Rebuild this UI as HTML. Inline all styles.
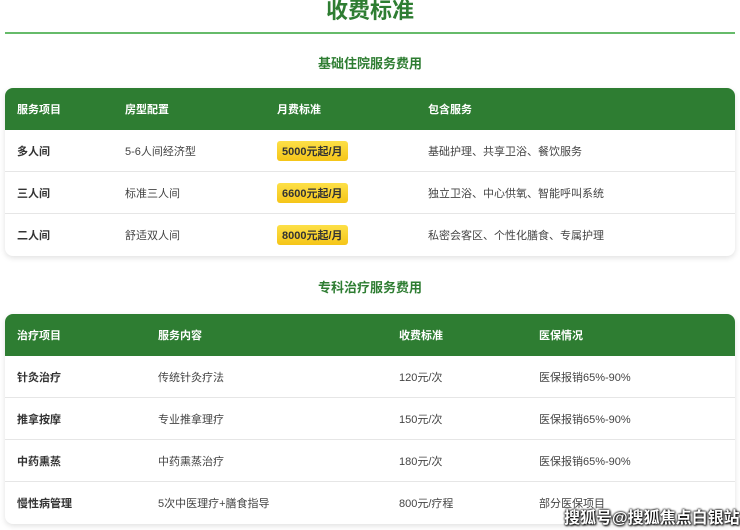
<!DOCTYPE html>
<html><head><meta charset="utf-8"><style>
*{margin:0;padding:0;box-sizing:border-box}
body{width:740px;height:530px;overflow:hidden;background:#fff;font-family:"Liberation Sans","Noto Sans CJK SC",sans-serif;position:relative}
.t{position:absolute;left:0;width:740px;text-align:center;color:#2e7d32;font-weight:bold}
.line{position:absolute;left:5px;width:730px;top:32px;height:2px;background:#66bb6a}
.tb{position:absolute;left:5px;width:730px;border-radius:8px;overflow:hidden;box-shadow:0 2px 6px rgba(0,0,0,.12);background:#fff}
.row{height:42px;position:relative;border-bottom:1px solid #e6e6e6;font-size:11px;color:#444}
.row:last-child{border-bottom:none}
.row span{position:absolute;top:50%;transform:translateY(-50%);white-space:nowrap}
.hd{background:#2e7d32;color:#fff;font-weight:bold;border-bottom:none}
.b{font-weight:bold;color:#333}
.badge{background:linear-gradient(#fde047,#f5c518);color:#333;font-weight:bold;padding:2px 5px;border-radius:3px}
.wm{position:absolute;left:564px;top:504px;color:#fff;font-size:16px;font-weight:bold;text-shadow:0 0 2px #000,0 0 2px #000,1px 1px 2px #000}
</style></head><body>
<div class="t" style="top:-7px;font-size:22px">收费标准</div>
<div class="line"></div>
<div class="t" style="top:53px;font-size:13px">基础住院服务费用</div>
<div class="tb" style="top:88px">
<div class="row hd"><span style="left:12px">服务项目</span><span style="left:120px">房型配置</span><span style="left:272px">月费标准</span><span style="left:423px">包含服务</span></div>
<div class="row"><span class="b" style="left:12px">多人间</span><span style="left:120px">5-6人间经济型</span><span class="badge" style="left:272px">5000元起/月</span><span style="left:423px">基础护理、共享卫浴、餐饮服务</span></div>
<div class="row"><span class="b" style="left:12px">三人间</span><span style="left:120px">标准三人间</span><span class="badge" style="left:272px">6600元起/月</span><span style="left:423px">独立卫浴、中心供氧、智能呼叫系统</span></div>
<div class="row"><span class="b" style="left:12px">二人间</span><span style="left:120px">舒适双人间</span><span class="badge" style="left:272px">8000元起/月</span><span style="left:423px">私密会客区、个性化膳食、专属护理</span></div>
</div>
<div class="t" style="top:277px;font-size:13px">专科治疗服务费用</div>
<div class="tb" style="top:314px">
<div class="row hd"><span style="left:12px">治疗项目</span><span style="left:153px">服务内容</span><span style="left:394px">收费标准</span><span style="left:534px">医保情况</span></div>
<div class="row"><span class="b" style="left:12px">针灸治疗</span><span style="left:153px">传统针灸疗法</span><span style="left:394px">120元/次</span><span style="left:534px">医保报销65%-90%</span></div>
<div class="row"><span class="b" style="left:12px">推拿按摩</span><span style="left:153px">专业推拿理疗</span><span style="left:394px">150元/次</span><span style="left:534px">医保报销65%-90%</span></div>
<div class="row"><span class="b" style="left:12px">中药熏蒸</span><span style="left:153px">中药熏蒸治疗</span><span style="left:394px">180元/次</span><span style="left:534px">医保报销65%-90%</span></div>
<div class="row"><span class="b" style="left:12px">慢性病管理</span><span style="left:153px">5次中医理疗+膳食指导</span><span style="left:394px">800元/疗程</span><span style="left:534px">部分医保项目</span></div>
</div>
<div class="wm">搜狐号@搜狐焦点白银站</div>
</body></html>
